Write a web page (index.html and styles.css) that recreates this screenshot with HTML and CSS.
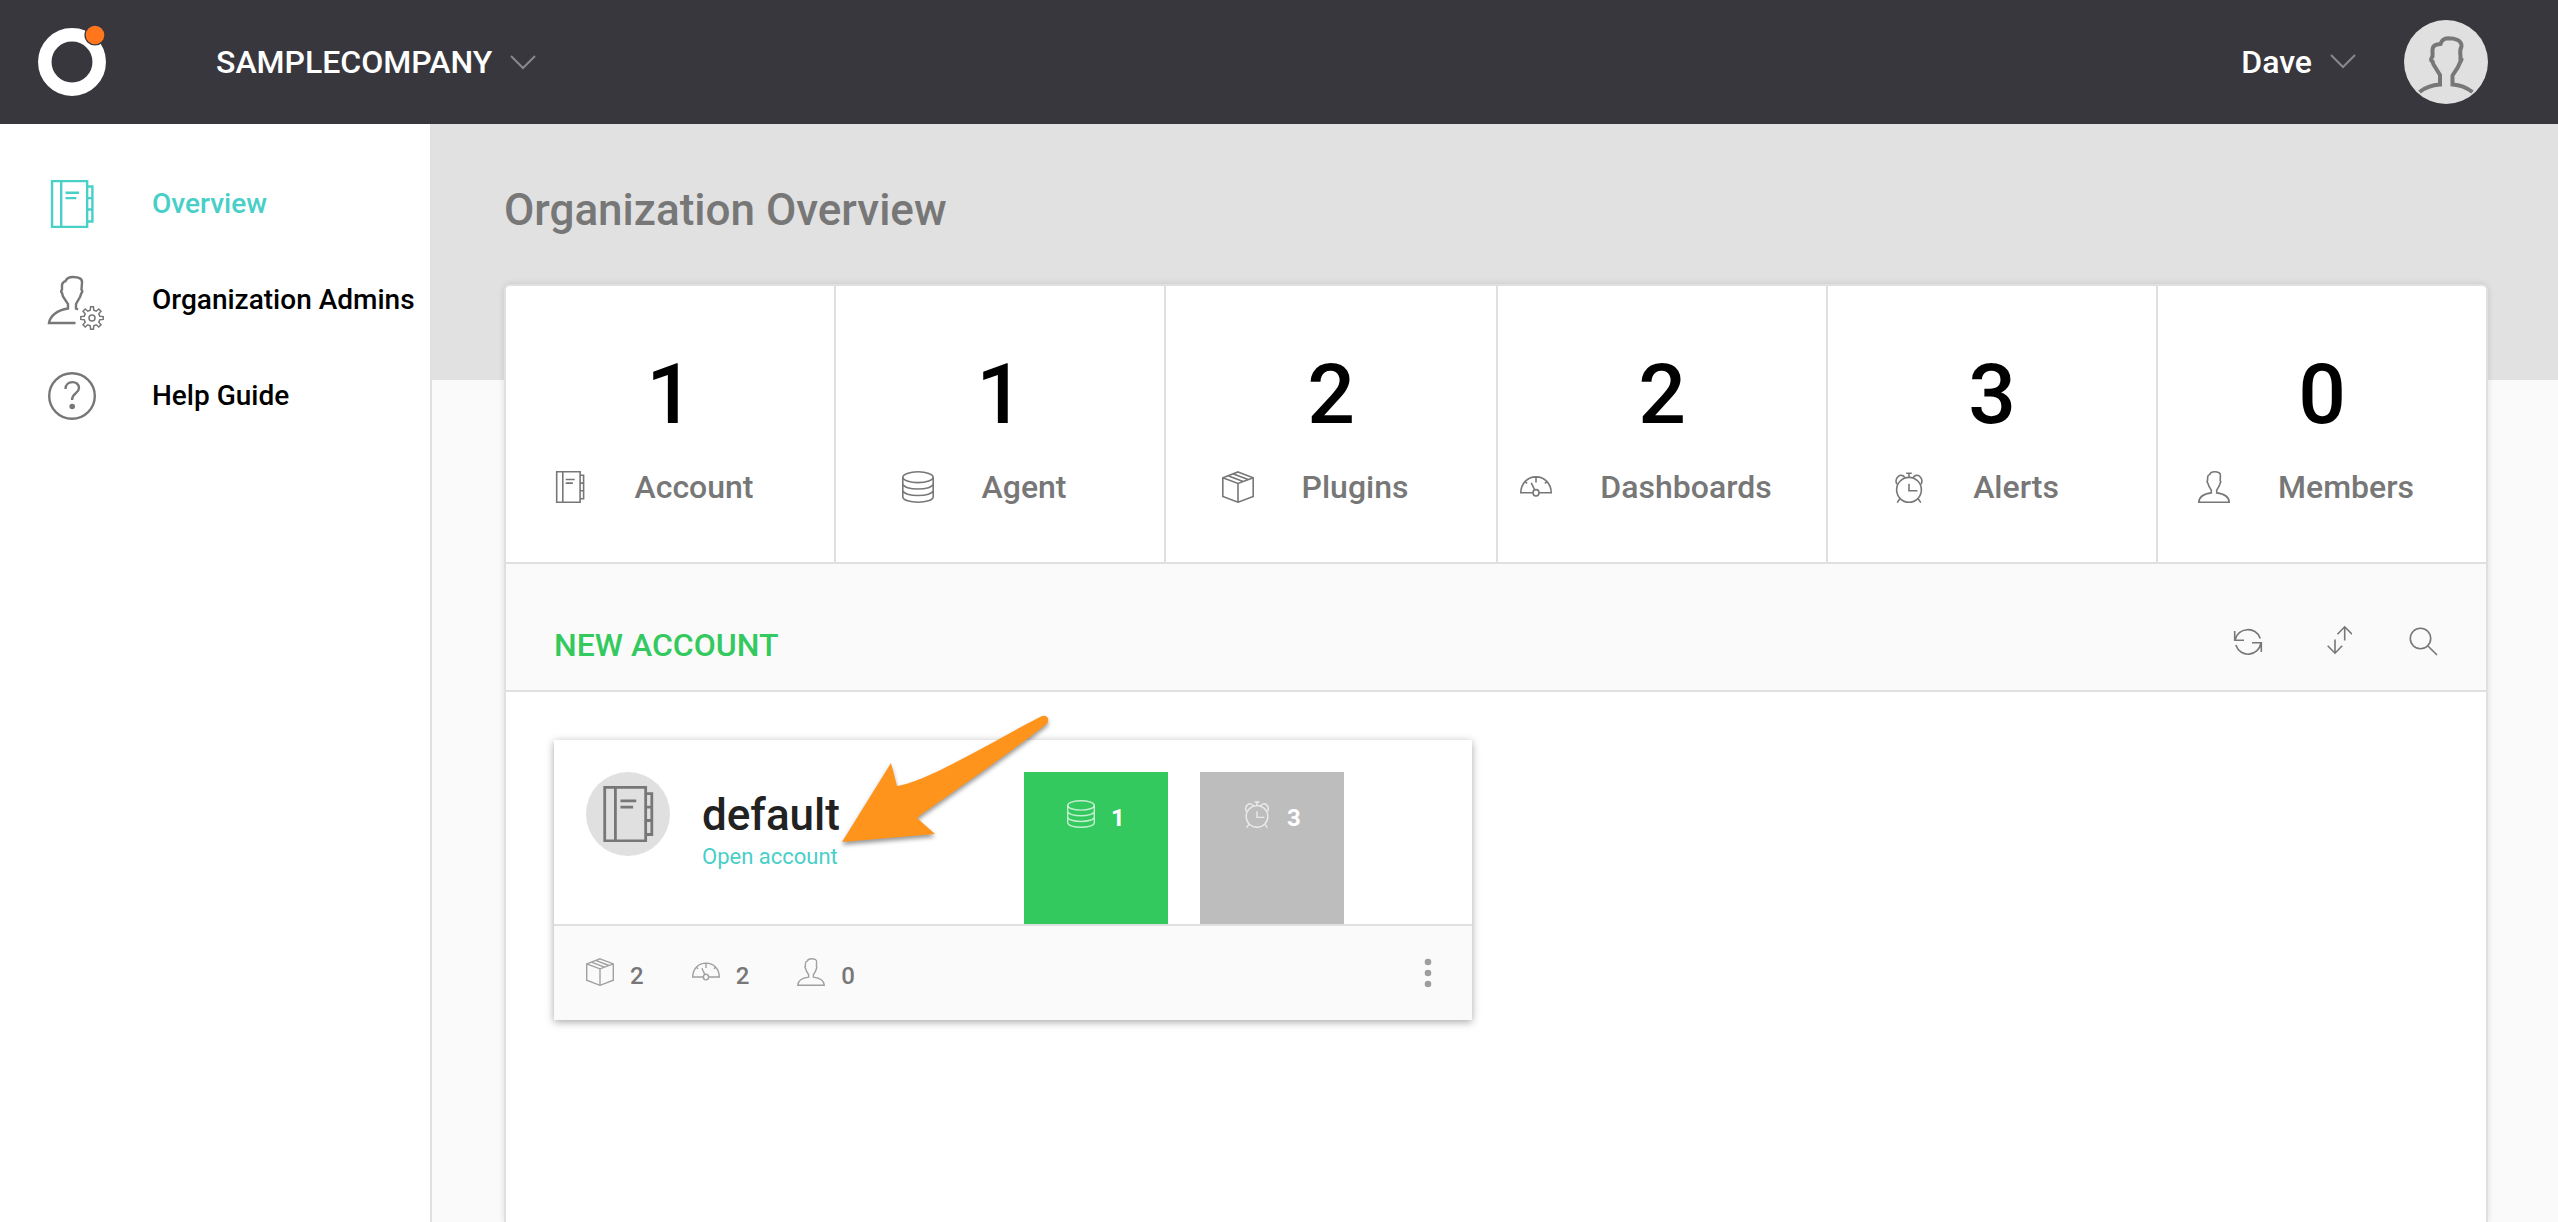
FILE: index.html
```html
<!DOCTYPE html>
<html lang="en">
<head>
<meta charset="utf-8">
<title>Organization Overview</title>
<meta name="viewport" content="width=device-width, initial-scale=1">
<link rel="stylesheet" href="styles.css">
</head>
<body>
<svg class="sprite" aria-hidden="true">
  <symbol id="book" viewBox="0 0 32 32">
    <path d="M2.700.7h23.400v30.600H2.700zM8.800.7v30.600M26.100 4.300h3.500v23.400h-3.500M26.100 12.100h3.500M26.100 19.700h3.500M11.700 8.500h9M11.700 12.100h7.200"/>
  </symbol>
  <symbol id="database" viewBox="0 0 32 32">
    <ellipse cx="16" cy="6.200" rx="15.200" ry="5.400"/>
    <path d="M.8 6.200v19.600c0 7.200 30.400 7.200 30.400 0V6.200M.8 12.600c0 7.200 30.400 7.200 30.400 0M.8 19.100c0 7.200 30.400 7.200 30.400 0"/>
  </symbol>
  <symbol id="box" viewBox="0 0 32 32">
    <path d="M16 .9l15.200 5.800v18.700L16 31.200.8 25.400V6.700zM.8 6.700L16 12.400l15.200-5.700M16 12.400v18.800M10.900 2.800l15.200 5.800M6 4.700l15.200 5.800"/>
  </symbol>
  <symbol id="gauge" viewBox="0 0 32 32">
    <path d="M12.800 21.700H.8C.9 12.600 7.300 5.900 16 5.900s15.100 6.700 15.200 15.800H19.200M16 6v5.400M5.400 10.800l1.700 1.500M26.600 10.800l-1.700 1.500M14.700 19l-3.400-7.200"/>
    <ellipse cx="16" cy="21.800" rx="3" ry="3.200"/>
  </symbol>
  <symbol id="clock" viewBox="0 0 32 32">
    <circle cx="16" cy="18.800" r="12.400"/>
    <path d="M16 12.800v7h8.400M16 2.200v4M13.200 2.200h5.600M3.800 13.200C1 6.500 8 1 12 6.700M28.200 13.200C31 6.500 24 1 20 6.700M6.800 27.800l-2.600 3.800M25.200 27.800l2.600 3.800"/>
  </symbol>
  <symbol id="person" viewBox="0 0 32 32">
    <path d="M.8 31.200C1 26 5 23 13.300 21.900V19.200L10.800 15 9.800 12Q8.600 10.800 9.500 9.800L9.700 6Q9.800 4 11.700 3.500 12.700.8 16.500.8 22.600.8 22.400 4.500L22.200 9.800Q23.400 10.800 22.200 12L21.200 15 18.700 19.200V21.900C27 23 31 26 31.200 31.200Z"/>
  </symbol>
</svg>

<header class="topbar">
  <a class="logo" href="#" aria-label="Home">
    <svg width="72" height="76" viewBox="0 0 72 76">
      <circle cx="36" cy="38" r="27.200" fill="none" stroke="#fff" stroke-width="13.500"/>
      <circle cx="59" cy="11" r="10.600" fill="#39373e"/>
      <circle cx="59" cy="11" r="9.300" fill="#ff761d"/>
    </svg>
  </a>
  <button class="menu-button" type="button">SAMPLECOMPANY
    <svg class="chevron" width="26" height="16" viewBox="0 0 26 16"><path d="M1 2l12 12L25 2"/></svg>
  </button>
  <button class="menu-button user" type="button">Dave
    <svg class="chevron" width="26" height="16" viewBox="0 0 26 16"><path d="M1 1l12 12L25 1"/></svg>
  </button>
  <svg class="avatar" viewBox="0 0 84 84" role="img" aria-label="Dave">
    <circle cx="42" cy="42" r="42" fill="#e0e0e0"/>
    <path d="M15.500 72C21 67.500 28 65 36 64.500V55L29.500 44.500 28.500 41.500Q25.500 40 28.500 36.500V30Q28.500 25.500 33 24.500L36.500 24Q38 18.500 44 18.300C51 18.300 58 20 57.500 26.500Q55.500 30 56.500 36V40.500Q59 37 55.500 43.500L54 47 48.500 55.500V64.500C56 65 62.500 67.500 68.500 72" fill="none" stroke="#777" stroke-width="4"/>
  </svg>
</header>

<div class="layout">
  <nav class="sidebar" aria-label="Main">
    <a class="nav-item active" href="#">
      <svg class="nav-icon"><use href="#book"/></svg>Overview
    </a>
    <a class="nav-item" href="#">
      <svg class="nav-icon" viewBox="0 0 48 48">
        <path d="M27.500 47H1C2 40 9 34 20 32.500V28L15 20.500 14 17Q12.500 15.500 14 13.500V9Q14.500 6 17.500 5.200 19 1 25 1 34.500 1 34 6.500L33.500 13.500Q35 15.500 33.500 17L32 21 28 28V32.500L30 33.500"/>
        <g transform="translate(44 42)" stroke-width="1.500">
          <path d="M7.800-1.800L11.200-1.400V1.400L7.800 1.800 6.800 4.200 9 6.800 6.800 9 4.200 6.800 1.800 7.800 1.400 11.200H-1.400L-1.800 7.800-4.200 6.800-6.800 9-9 6.800-6.800 4.200-7.800 1.800-11.200 1.400V-1.400L-7.800-1.800-6.800-4.200-9-6.800-6.800-9-4.200-6.800-1.800-7.800-1.400-11.200H1.400L1.800-7.800 4.200-6.800 6.800-9 9-6.800 6.800-4.200Z"/>
          <circle r="3"/>
        </g>
      </svg>Organization Admins
    </a>
    <a class="nav-item" href="#">
      <svg class="nav-icon" viewBox="0 0 48 48">
        <circle cx="24" cy="24" r="22.800"/>
        <path d="M17.500 17C17.500 8 31 8 31 16 31 21.500 24 21 24 28"/>
        <circle cx="24.200" cy="34.500" r="2.800" fill="#777" stroke="none"/>
      </svg>Help Guide
    </a>
  </nav>

  <main class="content">
    <h1 class="page-title">Organization Overview</h1>
    <section class="panel">
      <ul class="stats">
        <li class="stat"><span class="stat-value">1</span><span class="stat-label"><svg class="icon"><use href="#book"/></svg>Account</span></li>
        <li class="stat"><span class="stat-value">1</span><span class="stat-label"><svg class="icon"><use href="#database"/></svg>Agent</span></li>
        <li class="stat"><span class="stat-value">2</span><span class="stat-label"><svg class="icon"><use href="#box"/></svg>Plugins</span></li>
        <li class="stat"><span class="stat-value">2</span><span class="stat-label"><svg class="icon"><use href="#gauge"/></svg>Dashboards</span></li>
        <li class="stat"><span class="stat-value">3</span><span class="stat-label"><svg class="icon"><use href="#clock"/></svg>Alerts</span></li>
        <li class="stat"><span class="stat-value">0</span><span class="stat-label"><svg class="icon"><use href="#person"/></svg>Members</span></li>
      </ul>

      <div class="toolbar">
        <button class="new-account" type="button">NEW ACCOUNT</button>
        <div class="tools">
          <button class="tool" type="button" aria-label="Refresh">
            <svg class="icon" viewBox="0 0 32 32"><path d="M2.700 6v9.200H12M29.300 27v-9.200H20M3 15C5.500 2.500 24 .5 28.300 13.500M29 18C26.500 31.500 8.500 33.500 3.800 20"/></svg>
          </button>
          <button class="tool" type="button" aria-label="Sort">
            <svg class="icon" viewBox="0 0 32 32"><path d="M24.700 15.500V2M17.500 9.200L24.700 1.800 32 9.200M15 14.500V28M7.700 20.800L15 28.200 22.200 20.800"/></svg>
          </button>
          <button class="tool" type="button" aria-label="Search">
            <svg class="icon" viewBox="0 0 32 32"><circle cx="12.500" cy="13.500" r="10.200"/><path d="M19.700 20.700L29 30"/></svg>
          </button>
        </div>
      </div>

      <div class="cards">
        <article class="card">
          <div class="card-top">
            <svg class="card-badge" viewBox="0 0 84 84" aria-hidden="true">
              <circle cx="42" cy="42" r="42" fill="#e0e0e0" stroke="none"/>
              <use href="#book" x="14" y="14" width="56" height="56"/>
            </svg>
            <div class="card-name">
              <h2>default</h2>
              <a href="#">Open account</a>
              <svg class="pointer" width="216" height="140" viewBox="0 0 216 140" aria-hidden="true">
                <path d="M4 132L53 53 59 76C88 72 150 34 203 6.500 209 3.500 213 10 208 14.500 160 52 100 92 79 108L97 124Z"/>
              </svg>
            </div>
            <div class="tiles">
              <div class="tile tile-ok"><svg class="icon-small"><use href="#database"/></svg>1</div>
              <div class="tile"><svg class="icon-small"><use href="#clock"/></svg>3</div>
            </div>
          </div>
          <div class="card-footer">
            <span class="count"><svg class="icon-small"><use href="#box"/></svg>2</span>
            <span class="count"><svg class="icon-small"><use href="#gauge"/></svg>2</span>
            <span class="count"><svg class="icon-small"><use href="#person"/></svg>0</span>
            <button class="more" type="button" aria-label="More actions">
              <svg width="24" height="30" viewBox="0 0 24 30"><circle cx="12" cy="4" r="3.300"/><circle cx="12" cy="15" r="3.300"/><circle cx="12" cy="26" r="3.300"/></svg>
            </button>
          </div>
        </article>
      </div>
    </section>
  </main>
</div>
</body>
</html>
```
FILE: styles.css
```css
* {
  box-sizing: border-box;
}

body {
  display: flex;
  flex-direction: column;
  min-height: 100vh;
  margin: 0;
  background: #fafafa;
  color: #000;
  font-family: Roboto, "Liberation Sans", sans-serif;
  font-weight: 500;
}

a {
  text-decoration: none;
}

button {
  padding: 0;
  border: 0;
  background: none;
  font: inherit;
  cursor: pointer;
}

svg {
  display: block;
  flex: none;
}

.sprite {
  position: absolute;
  width: 0;
  height: 0;
}

.icon,
.icon-small,
.nav-icon,
.card-badge {
  fill: none;
  stroke: #777;
  stroke-width: 1.6;
}

symbol {
  stroke-width: 1.6;
}

.icon {
  width: 32px;
  height: 32px;
}

.icon-small {
  width: 28px;
  height: 28px;
}

/* Top bar */

.topbar {
  display: flex;
  align-items: center;
  height: 124px;
  padding: 0 70px 0 36px;
  background: #39373e;
}

.logo {
  margin-right: 108px;
}

.menu-button {
  display: flex;
  align-items: center;
  gap: 18px;
  color: #fff;
  font-size: 32px;
  line-height: 40px;
}

.user {
  margin-left: auto;
  margin-right: 48px;
}

.chevron {
  fill: none;
  stroke: #88878b;
  stroke-width: 2;
}

.avatar {
  width: 84px;
  height: 84px;
}

/* Sidebar */

.layout {
  display: flex;
  flex: 1;
}

.sidebar {
  flex: none;
  width: 432px;
  padding-top: 32px;
  border-right: 2px solid #e0e0e0;
  background: #fff;
}

.nav-item {
  display: flex;
  align-items: center;
  gap: 56px;
  height: 96px;
  padding-left: 48px;
  color: #000;
  font-size: 28px;
  line-height: 36px;
  white-space: nowrap;
}

.nav-item.active {
  color: #48cfc8;
}

.nav-item.active .nav-icon {
  stroke: #48cfc8;
}

.nav-icon {
  width: 48px;
  height: 48px;
  overflow: visible;
  stroke-width: 2.4;
}

/* Main column */

.content {
  display: flex;
  flex: 1;
  flex-direction: column;
  min-width: 0;
  padding: 60px 70px 0 72px;
  background: linear-gradient(#e1e1e1 256px, #fafafa 256px);
}

.page-title {
  margin: 0 0 48px;
  color: #777;
  font-size: 44px;
  font-weight: 500;
  line-height: 52px;
}

.panel {
  flex: 1;
  border: 2px solid #e0e0e0;
  border-bottom: 0;
  border-radius: 6px 6px 0 0;
  background: #fff;
  box-shadow: 0 0 6px rgba(0, 0, 0, 0.12);
}

.stats {
  display: grid;
  grid-template-columns: repeat(6, 1fr);
  margin: 0;
  padding: 0;
  border-bottom: 2px solid #e0e0e0;
  list-style: none;
}

.stat {
  display: flex;
  flex-direction: column;
  align-items: center;
  gap: 24px;
  padding: 61px 0 55px;
}

/* Dividers sit on the outer side of the third column */
.stat:nth-child(-n + 2) {
  border-right: 2px solid #e0e0e0;
}

.stat:nth-child(n + 4) {
  border-left: 2px solid #e0e0e0;
}

.stat-value {
  font-size: 84px;
  line-height: 96px;
}

.stat-label {
  display: flex;
  align-items: center;
  gap: 48px;
  padding-right: 32px;
  color: #777;
  font-size: 32px;
  line-height: 40px;
}

.toolbar {
  display: flex;
  justify-content: space-between;
  align-items: flex-start;
  padding: 61px 46px 25px 48px;
  border-bottom: 2px solid #e0e0e0;
  background: #fafafa;
}

.new-account {
  color: #34c95e;
  font-size: 32px;
  line-height: 40px;
}

.tools {
  display: flex;
  gap: 56px;
}

/* Account cards */

.cards {
  display: grid;
  grid-template-columns: repeat(2, 1fr);
  gap: 48px;
  padding: 48px;
}

.card {
  background: #fff;
  box-shadow: 0 2px 8px rgba(0, 0, 0, 0.35);
}

.card-top {
  display: flex;
  gap: 32px;
  padding: 32px 128px 0 32px;
  border-bottom: 2px solid #e0e0e0;
}

.card-badge {
  width: 84px;
  height: 84px;
}

.card-name {
  position: relative;
  flex: 1;
  padding-top: 16px;
}

.card-name h2 {
  margin: 0;
  color: #222;
  font-size: 44px;
  font-weight: 500;
  line-height: 54px;
}

.card-name a {
  display: block;
  color: #48cfc8;
  font-size: 22px;
  font-weight: 400;
  line-height: 30px;
}

.pointer {
  position: absolute;
  top: -62px;
  left: 136px;
  fill: #ff941c;
  filter: drop-shadow(0 3px 2px rgba(0, 0, 0, 0.4));
}

.tiles {
  display: flex;
  gap: 32px;
}

.tile {
  display: flex;
  justify-content: center;
  align-items: flex-start;
  gap: 16px;
  width: 144px;
  height: 152px;
  padding-top: 28px;
  background: #bdbdbd;
  color: #fff;
  font-size: 24px;
  font-weight: 700;
  line-height: 36px;
}

.tile .icon-small {
  stroke: rgba(255, 255, 255, 0.7);
}

.tile-ok {
  background: #34c95e;
}

.card-footer {
  display: flex;
  gap: 48px;
  padding: 32px 32px 26px;
  background: #fafafa;
}

.count {
  display: flex;
  gap: 16px;
  color: #777;
  font-size: 24px;
  line-height: 36px;
}

.card-footer .icon-small {
  stroke: #a0a0a0;
}

.more {
  align-self: flex-start;
  margin-left: auto;
  fill: #9e9e9e;
}
```
